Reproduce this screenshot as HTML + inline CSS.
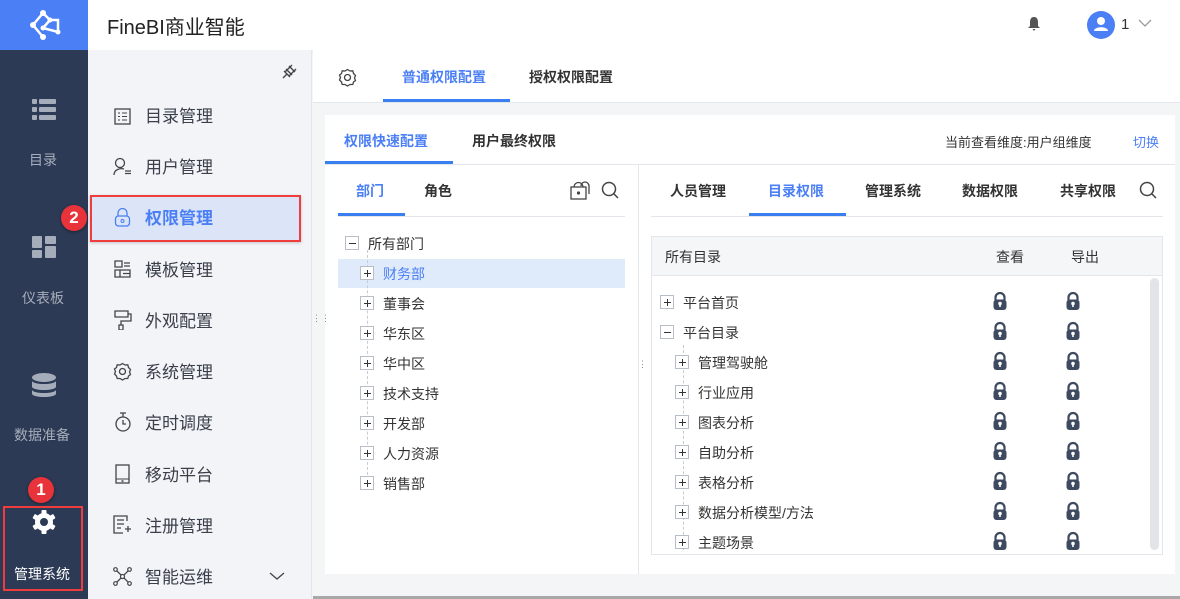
<!DOCTYPE html>
<html><head><meta charset="utf-8"><style>
*{margin:0;padding:0;box-sizing:border-box}
body{width:1180px;height:599px;overflow:hidden;background:#f4f5f7;font-family:"Liberation Sans","Noto Sans CJK SC",sans-serif;color:#333;position:relative}
.a{position:absolute}
.t{position:absolute;white-space:nowrap}
.pb{position:absolute;width:14px;height:14px;border:1px solid #b8bec8;background:#fff;margin:-1px 0 0 -1px}
.pb:before{content:"";position:absolute;left:2.5px;top:5.5px;width:7px;height:1.3px;background:#333}
.pb.p:after{content:"";position:absolute;left:5.5px;top:2.5px;width:1.3px;height:7px;background:#333}
.dash{position:absolute;border-left:1px dashed #c8ccd2}
.menu .t{font-size:17px;color:#3a3f4a;margin-top:-3px}
</style></head><body>
<!-- top bar -->
<div class="a" style="left:0;top:0;width:1180px;height:50px;background:#fff;box-shadow:0 2px 4px rgba(0,0,0,.05)"></div>
<div class="a" style="left:0;top:0;width:88px;height:50px;background:#4b7ff5"></div>
<svg class="a" style="left:26px;top:8px" width="36" height="34" viewBox="0 0 36 34"><g stroke="#fff" stroke-width="2.5" fill="none"><path d="M17 5 L7 17 L17 29 M17 5 L24 12 L17 20 M24 12 L32 12 L32 24 L17 20"/></g><g fill="#fff"><circle cx="17" cy="5" r="3"/><circle cx="7" cy="17" r="3"/><circle cx="17" cy="29" r="3"/><circle cx="24" cy="12" r="2.5"/><circle cx="17" cy="20" r="2.5"/><circle cx="32" cy="24" r="2.5"/></g></svg>
<div class="t" style="left:107px;top:11px;font-size:20px;color:#222">FineBI商业智能</div>
<svg class="a" style="left:1026px;top:16px" width="16" height="16" viewBox="0 0 16 16"><path d="M8 1 C4.5 1 4 4 4 7 L4 10 L2 12 L14 12 L12 10 L12 7 C12 4 11.5 1 8 1Z M6.5 13 L9.5 13 L8 15Z" fill="#555"/></svg>
<div class="a" style="left:1087px;top:11px;width:28px;height:28px;border-radius:50%;background:#4b7ff5"></div>
<svg class="a" style="left:1092px;top:15px" width="18" height="18"><circle cx="9" cy="6" r="4" fill="#fff"/><path d="M2 16 C2 11 16 11 16 16Z" fill="#fff"/></svg>
<div class="t" style="left:1121px;top:16px;font-size:15px;color:#333">1</div>
<svg class="a" style="left:1138px;top:19px" width="14" height="9"><path d="M1 1 L7 7 L13 1" stroke="#999" fill="none" stroke-width="1.3"/></svg>

<!-- dark sidebar -->
<div class="a" style="left:0;top:50px;width:88px;height:549px;background:#2c3a55"></div>
<svg class="a" style="left:32px;top:99px" width="24" height="21"><g fill="#a6adba"><rect x="0" y="0" width="5" height="5" rx="1"/><rect x="7" y="0" width="17" height="5" rx="1"/><rect x="0" y="8" width="5" height="5" rx="1"/><rect x="7" y="8" width="17" height="5" rx="1"/><rect x="0" y="16" width="5" height="5" rx="1"/><rect x="7" y="16" width="17" height="5" rx="1"/></g></svg>
<div class="t" style="left:29px;top:150px;font-size:14px;color:#a6adba">目录</div>
<svg class="a" style="left:32px;top:236px" width="24" height="22"><g fill="#a6adba"><rect x="0" y="0" width="10" height="12" rx="1"/><rect x="13" y="0" width="11" height="8" rx="1"/><rect x="0" y="14" width="10" height="8" rx="1"/><rect x="13" y="10" width="11" height="12" rx="1"/></g></svg>
<div class="t" style="left:22px;top:288px;font-size:14px;color:#a6adba">仪表板</div>
<svg class="a" style="left:32px;top:373px" width="24" height="25"><g fill="#a6adba"><ellipse cx="12" cy="4.5" rx="12" ry="4.5"/><path d="M0 8 C2 12 22 12 24 8 L24 14 C22 18 2 18 0 14Z"/><path d="M0 17 C2 21 22 21 24 17 L24 21 C22 25 2 25 0 21Z"/></g></svg>
<div class="t" style="left:14px;top:425px;font-size:14px;color:#a6adba">数据准备</div>
<svg class="a" style="left:31px;top:509px" width="26" height="26" viewBox="0 0 26 26"><g fill="#fff"><circle cx="13" cy="13" r="9"/><g><rect x="10.5" y="1" width="5" height="24" rx="1"/><rect x="10.5" y="1" width="5" height="24" rx="1" transform="rotate(60 13 13)"/><rect x="10.5" y="1" width="5" height="24" rx="1" transform="rotate(120 13 13)"/></g></g><circle cx="13" cy="13" r="4" fill="#2c3a55"/></svg>
<div class="t" style="left:14px;top:564px;font-size:14px;color:#fff">管理系统</div>
<div class="a" style="left:3px;top:506px;width:80px;height:85px;border:2px solid #ef3d3d"></div>
<div class="a" style="left:28px;top:477px;width:26px;height:26px;border-radius:50%;background:#e8333a;color:#fff;font-size:17px;font-weight:bold;text-align:center;line-height:26px;box-shadow:0 1px 3px rgba(0,0,0,.4)">1</div>

<!-- menu panel -->
<div class="a" style="left:88px;top:50px;width:224px;height:549px;background:#f2f4f8;border-right:1px solid #e3e6eb"></div>
<svg class="a" style="left:280px;top:63px" width="18" height="18"><path d="M4 8 L10 14 M6 6 L12 12 M9 3 L15 9 M5 9 L12 2 M9 13 L16 6 M3 15 L7 11" stroke="#444" stroke-width="1.4" fill="none"/></svg>
<div class="a" style="left:90px;top:196px;width:210px;height:45px;background:#dbe5f7"></div>
<div class="a" style="left:90px;top:195px;width:211px;height:47px;border:2px solid #ef3d3d;box-shadow:0 1px 3px rgba(0,0,0,.2)"></div>
<div class="a" style="left:61px;top:205px;width:26px;height:26px;border-radius:50%;background:#e8333a;color:#fff;font-size:17px;font-weight:bold;text-align:center;line-height:26px;box-shadow:0 1px 3px rgba(0,0,0,.4)">2</div>
<div class="menu">
<svg class="a" style="left:114px;top:108px" width="17" height="17"><rect x="1" y="1" width="15" height="15" fill="none" stroke="#444" stroke-width="1.3"/><path d="M4 5h2M8 5h5M4 8.5h2M8 8.5h5M4 12h2M8 12h5" stroke="#444"/></svg>
<div class="t" style="left:145px;top:105px">目录管理</div>
<svg class="a" style="left:113px;top:157px" width="19" height="19"><circle cx="7" cy="6" r="4.5" fill="none" stroke="#444" stroke-width="1.3"/><path d="M1 18 C1 12 8 11 11 12 M12 14h6M12 16.5h6" stroke="#444" stroke-width="1.3" fill="none"/></svg>
<div class="t" style="left:145px;top:156px">用户管理</div>
<svg class="a" style="left:114px;top:207px" width="17" height="20"><path d="M4 9 V6 a4.5 4.5 0 0 1 9 0 V9" fill="none" stroke="#4b7ff5" stroke-width="1.3"/><rect x="1.5" y="9" width="14" height="10" rx="3" fill="none" stroke="#4b7ff5" stroke-width="1.3"/><circle cx="8.5" cy="14" r="1.5" fill="none" stroke="#4b7ff5"/></svg>
<div class="t" style="left:145px;top:207px;color:#4b7ff5;font-weight:bold">权限管理</div>
<svg class="a" style="left:114px;top:260px" width="17" height="18"><path d="M1 1h7v6H1zM10 3h6M10 6h6M1 10h15v7H1z M6 10v7M9 13.5h7" fill="none" stroke="#444" stroke-width="1.3"/></svg>
<div class="t" style="left:145px;top:259px">模板管理</div>
<svg class="a" style="left:114px;top:310px" width="18" height="20"><path d="M1 1h13v6H1z M14 4h3v7H7v4 M5 15h4v5H5z" fill="none" stroke="#444" stroke-width="1.3"/></svg>
<div class="t" style="left:145px;top:310px">外观配置</div>
<svg class="a" style="left:113px;top:362px" width="19" height="19" viewBox="0 0 19 19"><path d="M9.5 1.5 L12 3 L14.8 2.8 L15.5 5.5 L17.5 7.5 L16.5 10 L17.5 12.5 L15.5 14 L14.8 16.5 L12 16.5 L9.5 18 L7 16.5 L4.2 16.5 L3.5 14 L1.5 12 L2.5 9.5 L1.5 7 L3.5 5.5 L4.2 2.8 L7 3Z" fill="none" stroke="#444" stroke-width="1.3"/><circle cx="9.5" cy="9.5" r="3" fill="none" stroke="#444" stroke-width="1.3"/></svg>
<div class="t" style="left:145px;top:361px">系统管理</div>
<svg class="a" style="left:114px;top:412px" width="18" height="20"><circle cx="9" cy="12" r="7" fill="none" stroke="#444" stroke-width="1.3"/><path d="M6 1h6M9 1v4M9 8v4h3" fill="none" stroke="#444" stroke-width="1.3"/></svg>
<div class="t" style="left:145px;top:412px">定时调度</div>
<svg class="a" style="left:115px;top:464px" width="15" height="20"><rect x="1" y="1" width="13" height="18" fill="none" stroke="#444" stroke-width="1.3"/><path d="M1 15h13" stroke="#444"/><rect x="6.5" y="16.3" width="2" height="1.5" fill="#444"/></svg>
<div class="t" style="left:145px;top:464px">移动平台</div>
<svg class="a" style="left:113px;top:515px" width="19" height="19"><path d="M14 6V1H1v17h9 M4 5h7M4 9h7M4 13h4M12 14h6M15 11v6" fill="none" stroke="#444" stroke-width="1.3"/></svg>
<div class="t" style="left:145px;top:515px">注册管理</div>
<svg class="a" style="left:113px;top:567px" width="19" height="19"><path d="M2 2L17 17M17 2L2 17" stroke="#444" stroke-width="1.3"/><g fill="#fff" stroke="#444" stroke-width="1.2"><circle cx="2.5" cy="2.5" r="1.8"/><circle cx="16.5" cy="2.5" r="1.8"/><circle cx="2.5" cy="16.5" r="1.8"/><circle cx="16.5" cy="16.5" r="1.8"/><circle cx="9.5" cy="9.5" r="2"/></g></svg>
<div class="t" style="left:145px;top:566px">智能运维</div>
<svg class="a" style="left:269px;top:572px" width="16" height="9"><path d="M1 1L8 7L15 1" stroke="#444" fill="none" stroke-width="1.3"/></svg>
</div>

<!-- main header tabs -->
<div class="a" style="left:313px;top:50px;width:867px;height:53px;background:#fff;border-bottom:1px solid #e3e6eb"></div>
<svg class="a" style="left:338px;top:68px" width="19" height="19" viewBox="0 0 19 19"><path d="M9.5 1.5 L12 3 L14.8 2.8 L15.5 5.5 L17.5 7.5 L16.5 10 L17.5 12.5 L15.5 14 L14.8 16.5 L12 16.5 L9.5 18 L7 16.5 L4.2 16.5 L3.5 14 L1.5 12 L2.5 9.5 L1.5 7 L3.5 5.5 L4.2 2.8 L7 3Z" fill="none" stroke="#444" stroke-width="1.3"/><circle cx="9.5" cy="9.5" r="3" fill="none" stroke="#444" stroke-width="1.3"/></svg>
<div class="t" style="left:402px;top:67px;font-size:14px;font-weight:bold;color:#4b7ff5">普通权限配置</div>
<div class="a" style="left:383px;top:99px;width:127px;height:3px;background:#3a7ff0"></div>
<div class="t" style="left:529px;top:67px;font-size:14px;font-weight:bold;color:#333">授权权限配置</div>

<!-- content card -->
<div class="a" style="left:325px;top:115px;width:850px;height:459px;background:#fff"></div>
<div class="t" style="left:344px;top:131px;font-size:14px;font-weight:bold;color:#4b7ff5">权限快速配置</div>
<div class="a" style="left:325px;top:161px;width:128px;height:3px;background:#3a7ff0"></div>
<div class="t" style="left:472px;top:131px;font-size:14px;font-weight:bold;color:#333">用户最终权限</div>
<div class="t" style="left:945px;top:132px;font-size:13px;color:#333">当前查看维度:用户组维度</div>
<div class="t" style="left:1133px;top:132px;font-size:13px;color:#4b7ff5">切换</div>
<div class="a" style="left:325px;top:164px;width:850px;height:1px;background:#e3e6eb"></div>
<div class="a" style="left:638px;top:165px;width:1px;height:409px;background:#e3e6eb"></div>
<div class="a" style="left:312px;top:316px;width:13px;height:20px;color:#888;font-size:9px;line-height:5px;text-align:center">⋮⋮</div>
<div class="a" style="left:638px;top:362px;width:13px;height:20px;color:#888;font-size:9px;line-height:5px;text-align:center">⋮⋮</div>

<!-- left pane -->
<div class="t" style="left:356px;top:181px;font-size:14px;font-weight:bold;color:#4b7ff5">部门</div>
<div class="a" style="left:338px;top:213px;width:67px;height:3px;background:#3a7ff0"></div>
<div class="t" style="left:424px;top:181px;font-size:14px;font-weight:bold;color:#333">角色</div>
<svg class="a" style="left:570px;top:180px" width="21" height="20"><path d="M11 6 a4 4 0 0 1 8 0 V14" fill="none" stroke="#444" stroke-width="1.3"/><rect x="1" y="7" width="15" height="12" fill="#fff" stroke="#444" stroke-width="1.3"/><path d="M4 7 a4.5 4.5 0 0 1 9 0" fill="none" stroke="#444" stroke-width="1.3"/><circle cx="8.5" cy="13" r="1.6" fill="#444"/></svg>
<svg class="a" style="left:601px;top:181px" width="18" height="18"><circle cx="8" cy="8" r="6.5" fill="none" stroke="#444" stroke-width="1.5"/><path d="M12.5 12.5L17 17" stroke="#444" stroke-width="1.5"/></svg>
<div class="a" style="left:338px;top:216px;width:287px;height:1px;background:#e3e6eb"></div>
<div class="pb" style="left:346px;top:237px"></div>
<div class="t" style="left:368px;top:234px;font-size:14px">所有部门</div>
<div class="a" style="left:338px;top:259px;width:287px;height:29px;background:#dfeafb"></div>
<div class="dash" style="left:367px;top:250px;height:235px"></div>
<div class="pb p" style="left:361px;top:267px"></div><div class="t" style="left:383px;top:264px;font-size:14px;color:#4b7ff5">财务部</div>
<div class="pb p" style="left:361px;top:297px"></div><div class="t" style="left:383px;top:294px;font-size:14px">董事会</div>
<div class="pb p" style="left:361px;top:327px"></div><div class="t" style="left:383px;top:324px;font-size:14px">华东区</div>
<div class="pb p" style="left:361px;top:357px"></div><div class="t" style="left:383px;top:354px;font-size:14px">华中区</div>
<div class="pb p" style="left:361px;top:387px"></div><div class="t" style="left:383px;top:384px;font-size:14px">技术支持</div>
<div class="pb p" style="left:361px;top:417px"></div><div class="t" style="left:383px;top:414px;font-size:14px">开发部</div>
<div class="pb p" style="left:361px;top:447px"></div><div class="t" style="left:383px;top:444px;font-size:14px">人力资源</div>
<div class="pb p" style="left:361px;top:477px"></div><div class="t" style="left:383px;top:474px;font-size:14px">销售部</div>

<!-- right pane -->
<div class="t" style="left:670px;top:181px;font-size:14px;font-weight:bold;color:#333">人员管理</div>
<div class="t" style="left:768px;top:181px;font-size:14px;font-weight:bold;color:#4b7ff5">目录权限</div>
<div class="a" style="left:749px;top:213px;width:97px;height:3px;background:#3a7ff0"></div>
<div class="t" style="left:865px;top:181px;font-size:14px;font-weight:bold;color:#333">管理系统</div>
<div class="t" style="left:962px;top:181px;font-size:14px;font-weight:bold;color:#333">数据权限</div>
<div class="t" style="left:1060px;top:181px;font-size:14px;font-weight:bold;color:#333">共享权限</div>
<svg class="a" style="left:1139px;top:181px" width="18" height="18"><circle cx="8" cy="8" r="6.5" fill="none" stroke="#444" stroke-width="1.5"/><path d="M12.5 12.5L17 17" stroke="#444" stroke-width="1.5"/></svg>
<div class="a" style="left:651px;top:216px;width:512px;height:1px;background:#e3e6eb"></div>
<div class="a" style="left:651px;top:236px;width:512px;height:319px;border:1px solid #e3e6eb"></div>
<div class="a" style="left:652px;top:237px;width:510px;height:39px;background:#f5f6f8;border-bottom:1px solid #e3e6eb"></div>
<div class="t" style="left:665px;top:247px;font-size:14px">所有目录</div>
<div class="t" style="left:996px;top:247px;font-size:14px">查看</div>
<div class="t" style="left:1071px;top:247px;font-size:14px">导出</div>
<div class="a" style="left:1150px;top:278px;width:9px;height:272px;border-radius:5px;background:#e2e4e8"></div>
<div class="dash" style="left:683px;top:345px;height:205px"></div>
<div class="pb p" style="left:661px;top:296px"></div><div class="t" style="left:683px;top:293px;font-size:14px">平台首页</div>
<div class="pb" style="left:661px;top:326px"></div><div class="t" style="left:683px;top:323px;font-size:14px">平台目录</div>
<div class="pb p" style="left:676px;top:356px"></div><div class="t" style="left:698px;top:353px;font-size:14px">管理驾驶舱</div>
<div class="pb p" style="left:676px;top:386px"></div><div class="t" style="left:698px;top:383px;font-size:14px">行业应用</div>
<div class="pb p" style="left:676px;top:416px"></div><div class="t" style="left:698px;top:413px;font-size:14px">图表分析</div>
<div class="pb p" style="left:676px;top:446px"></div><div class="t" style="left:698px;top:443px;font-size:14px">自助分析</div>
<div class="pb p" style="left:676px;top:476px"></div><div class="t" style="left:698px;top:473px;font-size:14px">表格分析</div>
<div class="pb p" style="left:676px;top:506px"></div><div class="t" style="left:698px;top:503px;font-size:14px">数据分析模型/方法</div>
<div class="pb p" style="left:676px;top:536px"></div><div class="t" style="left:698px;top:533px;font-size:14px">主题场景</div>
<svg class="a" style="left:992px;top:292px" width="95" height="262">
<defs><g id="lk"><path d="M2.5 8V5.5a4.5 4.5 0 0 1 9 0V8" fill="none" stroke="#3d4a5f" stroke-width="2.2"/><rect x="0.5" y="7.5" width="13" height="10.5" rx="3" fill="#3d4a5f"/><circle cx="7" cy="11.5" r="1.8" fill="#fff"/><rect x="6.2" y="11.5" width="1.6" height="3.5" fill="#fff"/></g></defs>
<use href="#lk" x="1" y="0"/><use href="#lk" x="74" y="0"/>
<use href="#lk" x="1" y="30"/><use href="#lk" x="74" y="30"/>
<use href="#lk" x="1" y="60"/><use href="#lk" x="74" y="60"/>
<use href="#lk" x="1" y="90"/><use href="#lk" x="74" y="90"/>
<use href="#lk" x="1" y="120"/><use href="#lk" x="74" y="120"/>
<use href="#lk" x="1" y="150"/><use href="#lk" x="74" y="150"/>
<use href="#lk" x="1" y="180"/><use href="#lk" x="74" y="180"/>
<use href="#lk" x="1" y="210"/><use href="#lk" x="74" y="210"/>
<use href="#lk" x="1" y="240"/><use href="#lk" x="74" y="240"/>
</svg>
<div class="a" style="left:313px;top:596px;width:867px;height:3px;background:#a8a8a8"></div>
</body></html>
